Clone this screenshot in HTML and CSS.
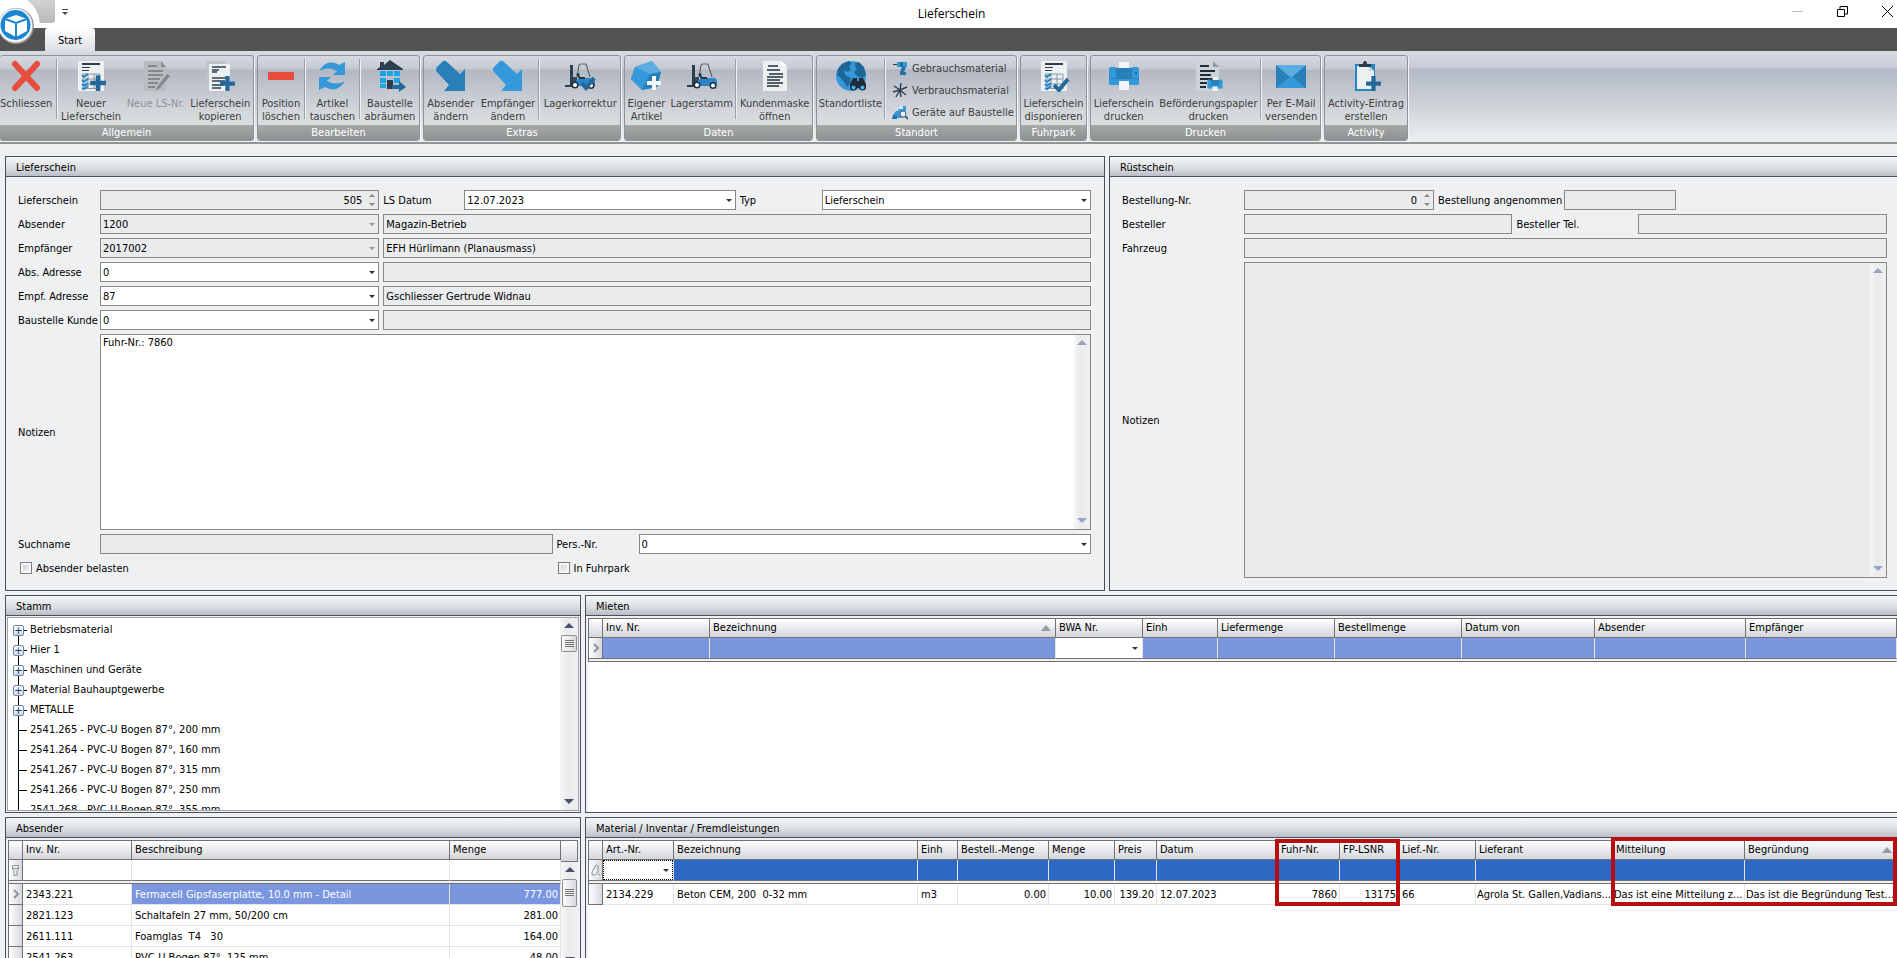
FILE: index.html
```
<!DOCTYPE html>
<html lang="de">
<head>
<meta charset="utf-8">
<title>Lieferschein</title>
<link rel="stylesheet" href="styles.css">
</head>
<body>
<svg class="defs" aria-hidden="true">
  <symbol id="plus" viewBox="0 0 16 16"><path d="M6 1h4v5h5v4h-5v5H6v-5H1V6h5z" fill="#24699a"/></symbol>
  <symbol id="form" viewBox="0 0 32 32">
    <path d="M3 1h26v30H3z" fill="#ecf0f1"/>
    <path d="M7 3h18v2H7zM7 7h8v1H7zM7 10h7v1H7z" fill="#2c3e50"/>
    <path d="M7 14h18M7 19h18M7 24h18M7 28.500h18M13 14v15M19 14v15M25 14v15" stroke="#8a98a3" fill="none"/>
    <path d="M7 15l2 2 4-3M7 20l2 2 4-3M7 24l2 2 4-3M7 28l2 1 4-3" stroke="#2480c0" stroke-width="2" fill="none"/>
  </symbol>
  <symbol id="lift" viewBox="0 0 32 32">
    <path d="M13 17l2-12q0-1 2-1h5l4 13" stroke="#5c6670" stroke-width="1.200" fill="none"/>
    <path d="M6 5h3v21H6zM1 25h9v2H1z" fill="#2c3e50"/><path d="M9 17h4v8H9z" fill="#34495e"/>
    <path d="M12 20l4-2h13q2 1 2 4v4H12z" fill="#2c84c8"/><path d="M15 13l1 4h5v2h-6l-3-5z" fill="#263746"/>
    <circle cx="11" cy="25" r="3.500" fill="#23303c"/><circle cx="11" cy="25" r="2" fill="#fff"/>
    <circle cx="27" cy="25.500" r="3.500" fill="#23303c"/><circle cx="27" cy="25.500" r="2" fill="#fff"/>
  </symbol>
  <symbol id="arrow" viewBox="0 0 32 32"><path d="M2 7L8 1q2-1 4 1l13 12 5-5v22H9l5-6L2 12q-2-3 0-5z" fill="currentColor"/></symbol>
  <symbol id="printer" viewBox="0 0 32 32">
    <path d="M11 2h10v7H11z" fill="#f3f6f7"/><path d="M1 9q0-2 2-2h5v2h16V7h5q2 0 2 2v16H1z" fill="#3498db"/>
    <path d="M8 8h16v11H8z" fill="#2980b9"/><path d="M1 18h7v1H1zM24 18h7v1h-7z" fill="#2980b9"/><path d="M27 12h2v2h-2z" fill="#22618d"/><path d="M11 21h10v9H11z" fill="#f3f6f7"/>
  </symbol>
  <symbol id="bars" viewBox="0 0 9 9"><path d="M0 .5h9M0 2.500h9M0 4.500h9M0 6.500h9" stroke="#777"/></symbol>
</svg>

<header class="titlebar">
  <div class="quick"></div>
  <button class="quick-menu" aria-label="Schnellzugriff anpassen"><svg width="6" height="6"><path d="M0 .5h6" stroke="#444"/><path d="M0 3h6L3 6z" fill="#444"/></svg></button>
  <h1>Lieferschein</h1>
  <div class="window-buttons">
    <button aria-label="Minimieren"><svg width="11" height="11"><path d="M0 5.500h11" stroke="#bbb"/></svg></button>
    <button aria-label="Wiederherstellen"><svg width="11" height="11"><path d="M.5 3.500h7v7h-7zM3 3V.5h7.500V8H8" fill="none" stroke="#000"/></svg></button>
    <button aria-label="Schliessen"><svg width="11" height="11"><path d="M0 0l11 11M11 0L0 11" stroke="#000"/></svg></button>
  </div>
</header>
<svg class="orb" width="42" height="50" viewBox="0 0 42 50" role="img" aria-label="Anwendungsmenü">
  <path d="M0 0h27Q40 9 40 28H0z" fill="#fff"/>
  <circle cx="16" cy="26" r="18" fill="#8f9499"/><circle cx="15.500" cy="25.500" r="17" fill="#f4f5f6"/>
  <circle cx="15.500" cy="25" r="15" fill="#1b87d2"/>
  <path d="M16 15l11 4v12l-11 6-11-6V19z" fill="#fff"/><path d="M5 19l11 4 11-4M16 23v14" stroke="#1b87d2" stroke-width="2" fill="none"/>
</svg>
<nav class="tabs"><button class="tab">Start</button></nav>

<div class="ribbon">
  <section class="group g-general">
    <div class="tools">
      <button class="tool snug"><svg><path d="M5 4l22 24M27 4L5 28" stroke="#e74c3c" stroke-width="6" stroke-linecap="round"/></svg>Schliessen</button><i class="sep"></i>
      <button class="tool"><svg><use href="#form"/><use href="#plus" x="14" y="14" width="18" height="18"/></svg>Neuer<br>Lieferschein</button>
      <button class="tool" disabled><svg><path d="M4 1h17l5 6v24H4z" fill="#b9bcbf"/><path d="M21 1v6h5z" fill="#8d9195"/><path d="M8 6h9M8 11h15M8 15h15M8 19h12M8 23h10M8 27h7" stroke="#85898d" stroke-width="2"/><path d="M17 27L27 14l3 2-10 12-4 2z" fill="#85898d"/></svg>Neue LS-Nr.</button>
      <button class="tool"><svg><path d="M2 1h20v26H2z" fill="#bdc3c7"/><path d="M5 4h21v27H5z" fill="#ecf0f1"/><path d="M8 7h14M8 10h7M8 12h5M8 18h15M8 21h13M8 25h11M8 28h9" stroke="#2c3e50" stroke-width="1.500"/><use href="#plus" x="15" y="15" width="17" height="17"/></svg>Lieferschein<br>kopieren</button>
    </div><h2>Allgemein</h2>
  </section>
  <section class="group g-edit">
    <div class="tools">
      <button class="tool"><svg><rect x="3" y="12" width="26" height="8" rx="1" fill="#e74c3c"/></svg>Position<br>löschen</button><i class="sep"></i>
      <button class="tool"><svg><path d="M3 11Q11-2 23 5l6-3v13H17l4-4Q12 6 3 11z" fill="#3498db"/><path d="M29 21q-8 13-20 6l-6 3V17h12l-4 4q9 5 18 0z" fill="#3498db"/></svg>Artikel<br>tauschen</button><i class="sep"></i>
      <button class="tool"><svg><path d="M3 9l3-2V2h4v3l6-5 13 9v1H3zM6 10h20v19H6z" fill="#2c3e50"/><path d="M6 10h20v19H6z" fill="#b9c1ca"/><path d="M6 11h6v5H6zM13 11h6v5h-6zM20 11h6v5h-6zM6 18h6v5H6zM20 18h6v5h-6zM6 24h6v4H6z" fill="#1ba4e8"/><path d="M13 20h6v9h-6z" fill="#2c3e50"/><path d="M18 25h7v-4l7 6-7 5v-3h-7z" fill="#24699a"/></svg>Baustelle<br>abräumen</button>
    </div><h2>Bearbeiten</h2>
  </section>
  <section class="group g-extras">
    <div class="tools">
      <button class="tool dark"><svg><use href="#arrow"/></svg>Absender<br>ändern</button>
      <button class="tool light"><svg><use href="#arrow"/></svg>Empfänger<br>ändern</button><i class="sep"></i>
      <button class="tool"><svg><use href="#lift"/><path d="M18 23l4 5 8-10" stroke="#24699a" stroke-width="4" fill="none"/></svg>Lagerkorrektur</button>
    </div><h2>Extras</h2>
  </section>
  <section class="group g-data">
    <div class="tools">
      <button class="tool"><svg><path d="M5 7l17-6 9 11-4 15-15 3-11-11z" fill="#3498db"/><path d="M5 7l17-6 9 11-11 2z" fill="#5dade2"/><path d="M5 7l15 7-8 16L1 19z" fill="#3498db"/><path d="M20 14l11-2-4 15-15 3z" fill="#2980b9"/><path d="M22 16h4v5h5v4h-5v5h-4v-5h-5v-4h5z" fill="#f4f7f8"/></svg>Eigener<br>Artikel</button>
      <button class="tool"><svg><use href="#lift"/></svg>Lagerstamm</button><i class="sep"></i>
      <button class="tool"><svg><path d="M4 1h18l6 5v25H4z" fill="#ecf0f1"/><path d="M22 1v5h6z" fill="#fff"/><path d="M9 6h10M8 10h13M10 14h14M8 17h16M8 20h13M8 23h16M8 26h12" stroke="#1f2d3a" stroke-width="1.500"/></svg>Kundenmaske<br>öffnen</button>
    </div><h2>Daten</h2>
  </section>
  <section class="group g-site">
    <div class="tools">
      <button class="tool"><svg><circle cx="16" cy="16" r="15" fill="#3498db"/><path d="M3 9l4-5 7-3 3 3-3 2 2 4-4 2-3-2 1 5 6 3-1 5-3 4-3-5-4-5-3-2zM20 3l4-1 5 5 2 8-4 3-5-2-3-4 3-3-2-3z" fill="#1f6698"/><path d="M15 24l3-6h4v3h2v-3h4l3 6v4H15z" fill="#1f2d3a"/><circle cx="18.500" cy="27" r="3.500" fill="#1f2d3a"/><circle cx="27.500" cy="27" r="3.500" fill="#1f2d3a"/><circle cx="18.500" cy="27.500" r="2" fill="#3fb4f2"/><circle cx="27.500" cy="27.500" r="2" fill="#3fb4f2"/></svg>Standortliste</button><i class="sep"></i>
      <div class="tool-list">
        <button class="small-tool"><svg viewBox="0 0 16 16"><path d="M5 2h10v5H5z" fill="#3498db"/><path d="M1 4h4v1H1z" fill="#2c3e50"/><path d="M10 7h4l-2 5h2v3H8v-3z" fill="#2471a3"/><path d="M8 2h3v5H8z" fill="#2471a3"/></svg>Gebrauchsmaterial</button>
        <button class="small-tool"><svg viewBox="0 0 16 16"><path d="M2 4l6 4 6 5M9 1L8 8l-4 7M15 5L8 8l-7 2M8 8l1 7" stroke="#2c3e50" stroke-width="1.400" fill="none"/></svg>Verbrauchsmaterial</button>
        <button class="small-tool"><svg viewBox="0 0 16 16"><path d="M1 11l3-4h2l2-5h6v4l-3 6v2H1z" fill="#3498db"/><path d="M6 5l2-3h3v3z" fill="#d6eaf8"/><path d="M1 11l4 1v3H0z" fill="#2471a3"/><circle cx="11" cy="10" r="3" fill="#e9f2f8" stroke="#4e6071"/><path d="M13 12l3 3" stroke="#4e6071" stroke-width="2"/></svg>Geräte auf Baustelle</button>
      </div>
    </div><h2>Standort</h2>
  </section>
  <section class="group g-fleet">
    <div class="tools">
      <button class="tool"><svg><use href="#form"/><path d="M16 25l5 5 9-11" stroke="#24699a" stroke-width="4" fill="none"/></svg>Lieferschein<br>disponieren</button>
    </div><h2>Fuhrpark</h2>
  </section>
  <section class="group g-print">
    <div class="tools">
      <button class="tool"><svg><use href="#printer"/></svg>Lieferschein<br>drucken</button>
      <button class="tool"><svg><path d="M4 1h17l6 6v24H4z" fill="#cdd3d6"/><path d="M21 1v6h6z" fill="#8c99a3"/><path d="M8 6h9M8 11h15M8 15h11M8 19h13M8 23h7M8 27h6" stroke="#1f2d3a" stroke-width="2"/><use href="#printer" x="15" y="16" width="16" height="16"/></svg>Beförderungspapier<br>drucken</button><i class="sep"></i>
      <button class="tool"><svg><path d="M1 5h30v23H1z" fill="#2980b9"/><path d="M1 5h30L16 18z" fill="#5dade2"/><path d="M1 28l15-12 15 12z" fill="#3498db"/></svg>Per E-Mail<br>versenden</button>
    </div><h2>Drucken</h2>
  </section>
  <section class="group g-activity">
    <div class="tools">
      <button class="tool"><svg><path d="M5 4h20v27H5z" fill="#2584c6"/><path d="M7 6h12l5 5v18H7z" fill="#ecf0f1"/><path d="M19 6v5h5z" fill="#b9d4e6"/><path d="M9 4h4q0-3 2-3t2 3h4v3H9z" fill="#2c3e50"/><use href="#plus" x="15" y="15" width="17" height="17"/></svg>Activity-Eintrag<br>erstellen</button>
    </div><h2>Activity</h2>
  </section>
</div>

<main>
  <div class="row row-top">
    <section class="panel">
      <h3>Lieferschein</h3>
      <form class="form form-note">
        <label for="nr">Lieferschein</label>
        <span class="field spin"><input id="nr" class="num" value="505" disabled></span>
        <label for="datum">LS Datum</label>
        <span class="field drop"><input id="datum" value="12.07.2023"></span>
        <label for="typ">Typ</label>
        <span class="field drop"><select id="typ"><option>Lieferschein</option></select></span>

        <label for="abs">Absender</label>
        <span class="field drop off"><select id="abs" disabled><option>1200</option></select></span>
        <input class="wide" aria-label="Absender Name" value="Magazin-Betrieb" disabled>
        <label for="empf">Empfänger</label>
        <span class="field drop off"><select id="empf" disabled><option>2017002</option></select></span>
        <input class="wide" aria-label="Empfänger Name" value="EFH Hürlimann (Planausmass)" disabled>
        <label for="absadr">Abs. Adresse</label>
        <span class="field drop"><select id="absadr"><option>0</option></select></span>
        <input class="wide" aria-label="Absender Adresse" disabled>
        <label for="empfadr">Empf. Adresse</label>
        <span class="field drop"><select id="empfadr"><option>87</option></select></span>
        <input class="wide" aria-label="Empfänger Adresse" value="Gschliesser Gertrude Widnau" disabled>
        <label for="kunde">Baustelle Kunde</label>
        <span class="field drop"><select id="kunde"><option>0</option></select></span>
        <input class="wide" aria-label="Baustelle Kunde Name" disabled>

        <label for="notizen">Notizen</label>
        <div class="memo full"><textarea id="notizen">Fuhr-Nr.: 7860</textarea><span class="scroll pale"></span></div>

        <label for="such">Suchname</label>
        <div class="halves full">
          <input id="such" disabled>
          <label for="pers">Pers.-Nr.</label>
          <span class="field drop"><select id="pers"><option>0</option></select></span>
        </div>
        <div class="checks">
          <label class="check"><input type="checkbox">Absender belasten</label>
          <label class="check"><input type="checkbox">In Fuhrpark</label>
        </div>
      </form>
    </section>
    <section class="panel open-right">
      <h3>Rüstschein</h3>
      <form class="form form-order">
        <label for="bnr">Bestellung-Nr.</label>
        <div class="order-a">
          <span class="field spin"><input id="bnr" class="num" value="0" disabled></span>
          <label for="bang">Bestellung angenommen</label>
          <input id="bang" disabled>
        </div>
        <label for="best">Besteller</label>
        <div class="order-b">
          <input id="best" disabled>
          <label for="btel">Besteller Tel.</label>
          <input id="btel" disabled>
        </div>
        <label for="fzg">Fahrzeug</label>
        <input id="fzg" disabled>
        <label for="rnot">Notizen</label>
        <div class="memo tall"><textarea id="rnot" disabled></textarea><span class="scroll pale"></span></div>
      </form>
    </section>
  </div>

  <div class="row row-mid">
    <section class="panel">
      <h3>Stamm</h3>
      <div class="tree">
        <ul>
          <li class="node"><button aria-label="Öffnen">+</button>Betriebsmaterial</li>
          <li class="node"><button aria-label="Öffnen">+</button>Hier 1</li>
          <li class="node"><button aria-label="Öffnen">+</button>Maschinen und Geräte</li>
          <li class="node"><button aria-label="Öffnen">+</button>Material Bauhauptgewerbe</li>
          <li class="node"><button aria-label="Öffnen">+</button>METALLE</li>
          <li>2541.265 - PVC-U Bogen 87°, 200 mm</li>
          <li>2541.264 - PVC-U Bogen 87°, 160 mm</li>
          <li>2541.267 - PVC-U Bogen 87°, 315 mm</li>
          <li>2541.266 - PVC-U Bogen 87°, 250 mm</li>
          <li>2541.268 - PVC-U Bogen 87°, 355 mm</li>
        </ul>
        <span class="scroll"><span class="thumb"><svg width="9" height="8"><use href="#bars" width="9" height="9"/></svg></span></span>
      </div>
    </section>
    <section class="panel open-right">
      <h3>Mieten</h3>
      <div class="grid">
        <table>
          <colgroup><col class="w14"><col class="w107"><col class="w346"><col class="w87"><col class="w75"><col class="w117"><col class="w127"><col class="w133"><col class="w151"><col></colgroup>
          <thead><tr><th></th><th>Inv. Nr.</th><th class="sorted">Bezeichnung</th><th>BWA Nr.</th><th>Einh</th><th>Liefermenge</th><th>Bestellmenge</th><th>Datum von</th><th>Absender</th><th>Empfänger</th></tr></thead>
          <tbody>
            <tr class="new soft"><td class="mark"><svg width="6" height="10"><path d="M1 1l4 4-4 4" stroke="#8d95a0" stroke-width="2" fill="none"/></svg></td><td></td><td></td><td class="edit"><span class="field drop"><select aria-label="BWA Nr."><option></option></select></span></td><td></td><td></td><td></td><td></td><td></td><td></td></tr>
            <tr class="split"><td colspan="10"></td></tr>
          </tbody>
        </table>
      </div>
    </section>
  </div>

  <div class="row row-bottom">
    <section class="panel open-bottom">
      <h3>Absender</h3>
      <div class="grid with-scroll">
        <table>
          <colgroup><col class="w14"><col class="w109"><col><col class="w111"></colgroup>
          <thead><tr><th></th><th>Inv. Nr.</th><th>Beschreibung</th><th>Menge</th></tr></thead>
          <tbody>
            <tr class="filter"><td class="mark"><svg width="7" height="11"><path d="M.5.5h6v3L5 6v4.500H2V6L.5 3.500zM.5 3.500h6" stroke="#8d95a0" fill="none"/></svg></td><td></td><td></td><td></td></tr>
            <tr class="split"><td colspan="4"></td></tr>
            <tr class="selected"><td class="mark"><svg width="6" height="10"><path d="M1 1l4 4-4 4" stroke="#8d95a0" stroke-width="2" fill="none"/></svg></td><td class="key">2343.221</td><td>Fermacell Gipsfaserplatte, 10.0 mm - Detail</td><td class="num">777.00</td></tr>
            <tr><td class="mark"></td><td>2821.123</td><td>Schaltafeln 27 mm, 50/200 cm</td><td class="num">281.00</td></tr>
            <tr><td class="mark"></td><td>2611.111</td><td>Foamglas&nbsp; T4 &nbsp; 30</td><td class="num">164.00</td></tr>
            <tr><td class="mark"></td><td>2541.263</td><td>PVC-U Bogen 87°, 125 mm</td><td class="num">-48.00</td></tr>
          </tbody>
        </table>
        <div class="side"><span class="scroll"><span class="thumb long"><svg width="9" height="8"><use href="#bars" width="9" height="9"/></svg></span></span></div>
      </div>
    </section>
    <section class="panel open-right open-bottom">
      <h3>Material / Inventar / Fremdleistungen</h3>
      <div class="grid">
        <table>
          <colgroup><col class="w14"><col class="w71"><col class="w244"><col class="w40"><col class="w91"><col class="w66"><col class="w42"><col class="w121"><col class="w62"><col class="w59"><col class="w77"><col class="w137"><col class="w132"><col></colgroup>
          <thead><tr><th></th><th>Art.-Nr.</th><th>Bezeichnung</th><th>Einh</th><th>Bestell.-Menge</th><th>Menge</th><th>Preis</th><th>Datum</th><th>Fuhr-Nr.</th><th>FP-LSNR</th><th>Lief.-Nr.</th><th>Lieferant</th><th>Mitteilung</th><th class="sorted">Begründung</th></tr></thead>
          <tbody>
            <tr class="new strong"><td class="mark"><svg width="9" height="12"><path d="M1 8l4-7 2 1v6l-3 3H1zM7 10.500h2" stroke="#8d95a0" fill="none"/></svg></td><td class="edit focus"><span class="field drop"><select aria-label="Art.-Nr."><option></option></select></span></td><td></td><td></td><td></td><td></td><td></td><td></td><td></td><td></td><td></td><td></td><td></td><td></td></tr>
            <tr class="split"><td colspan="14"></td></tr>
            <tr><td class="mark"></td><td>2134.229</td><td>Beton CEM, 200&nbsp; 0-32 mm</td><td>m3</td><td class="num">0.00</td><td class="num">10.00</td><td class="num">139.20</td><td>12.07.2023</td><td class="num">7860</td><td class="num">13175</td><td>66</td><td class="long-text">Agrola St. Gallen,Vadians...</td><td class="long-text">Das ist eine Mitteilung z...</td><td class="long-text">Das ist die Begründung Test...</td></tr>
          </tbody>
        </table>
        <div class="callout callout-trip"></div>
        <div class="callout callout-message"></div>
      </div>
    </section>
  </div>
</main>
</body>
</html>
```
FILE: styles.css
```
* { box-sizing: border-box; }
body {
  margin: 0;
  height: 100vh;
  display: flex;
  flex-direction: column;
  overflow: hidden;
  position: relative;
  background: #eff0f2;
  color: #000;
  font: 11px/13px "DejaVu Sans Condensed", "DejaVu Sans", sans-serif;
}
button, input, select, textarea { font: inherit; color: inherit; margin: 0; }
button { border: 0; padding: 0; background: none; }
h1, h2, h3 { margin: 0; font: inherit; }
.defs { position: absolute; width: 0; height: 0; }

/* Title bar and tabs */
.titlebar { height: 28px; flex: none; display: flex; background: #fff; }
.quick { width: 55px; height: 23px; background: linear-gradient(#d2d2d2, #b9b9b9); border-radius: 0 0 3px 0; }
.quick-menu { padding: 0 7px; height: 23px; }
.titlebar h1 { flex: 1; padding: 5px 0 0 36px; text-align: center; font: 12px/18px "Open Sans", sans-serif; }
.window-buttons { display: flex; gap: 34px; align-items: center; height: 23px; padding-right: 4px; }
.window-buttons svg { display: block; }
.orb { position: absolute; left: 0; top: 0; }
.tabs { height: 23px; flex: none; background: #535353; padding-left: 45px; }
.tab {
  width: 50px; height: 23px; display: block; padding-top: 2px;
  border-radius: 3px 3px 0 0;
  background: linear-gradient(#ffffff, #dcdfe5);
}

/* Ribbon */
.ribbon {
  flex: none; height: 93px; padding-top: 4px;
  display: flex; gap: 3px; align-items: flex-start;
  background: linear-gradient(#d9dce2, #c5cad5 17px, #b3bac6 18px, #d3d7dc 60px, #ebeeef 88px);
  border-bottom: 2px solid #8f9494;
  color: #3d3d3d;
}
.group {
  flex: none; height: 86px;
  display: flex; flex-direction: column;
  border: 1px solid #8e9398; border-radius: 3px; overflow: hidden;
  box-shadow: 1px 1px 0 #f4f5f6;
  background: linear-gradient(#d6d9df, #c4c9d2 13px, #b2b8c3 14px, #cfd3d9 50px, #dcdfe0 70px);
}
.g-general { width: 254px; border-left: 0; }
.g-edit { width: 163px; }
.g-extras { width: 198px; }
.g-data { width: 189px; }
.g-site { width: 201px; }
.g-fleet { width: 67px; }
.g-print { width: 231px; }
.g-activity { width: 84px; }
.group h2 { height: 15px; line-height: 15px; text-align: center; color: #fff; background: linear-gradient(#a8aaaa, #8d9090); }
.tools { flex: 1; display: flex; align-items: stretch; }
.tool { flex: 1 1 auto; align-self: flex-start; padding-top: 4px; text-align: center; white-space: nowrap; }
.tool svg { display: block; width: 32px; height: 32px; margin: 0 auto 5px; }
.tool:disabled { color: #8f9296; }
.snug { flex: none; padding-right: 2px; margin-right: 2px; }
.dark svg { color: #2980b9; }
.light svg { color: #3498db; }
.sep { width: 2px; margin: 3px 0 6px; border-left: 1px solid #9ba0a7; background: #eef0f2; }
.tool-list { flex: none; width: 130px; display: flex; flex-direction: column; padding: 1px 0 0 6px; }
.small-tool { height: 22px; display: flex; align-items: center; gap: 4px; white-space: nowrap; }
.small-tool svg { width: 16px; height: 16px; flex: none; }

/* Panels */
main { flex: 1; min-height: 0; display: flex; flex-direction: column; gap: 4px; padding: 12px 0 0 5px; }
.row { display: grid; gap: 4px; flex: none; }
.row-top { grid-template-columns: 1100fr 788fr; }
.row-mid, .row-bottom { grid-template-columns: 576fr 1312fr; }
.row-mid { height: 218px; }
.row-bottom { flex: 1; min-height: 0; }
.panel { display: flex; flex-direction: column; min-width: 0; min-height: 0; border: 1px solid #4a515c; overflow: hidden; }
.open-right { border-right: 0; }
.open-bottom { border-bottom: 0; }
.panel h3 { flex: none; height: 20px; line-height: 21px; padding-left: 10px; border-bottom: 1px solid #4a515c; background: linear-gradient(#f6f7f7, #dadde0 60%, #b9bec7); }

/* Forms */
.form { display: grid; gap: 4px; align-items: center; padding: 13px 13px 12px 12px; }
.form-note { grid-template-columns: 78px minmax(0, 279fr) 77px minmax(0, 271fr) 78px minmax(0, 269fr); }
.form-order { grid-template-columns: 118px minmax(0, 1fr); padding-right: 10px; }
.form label { white-space: nowrap; }
.wide { grid-column: span 4; }
.full { grid-column: 2 / -1; }
.form input:not([type]), select, textarea {
  display: block; width: 100%; height: 20px; min-width: 0;
  padding: 0 2px; border: 1px solid #858788; border-radius: 0;
  background: #fff; appearance: none; outline: 0; resize: none;
}
.form input:not([type]):disabled, select:disabled, textarea:disabled { background: #eaebed; color: #000; opacity: 1; }
.field { position: relative; display: block; min-width: 0; }
.drop::after {
  content: ""; position: absolute; right: 4px; top: 9px;
  border: solid transparent; border-width: 3px 3px 0; border-top-color: #333; pointer-events: none;
}
.off::after { border-top-color: #999; }
.form .spin input.num { text-align: right; padding-right: 16px; }
.spin::before, .spin::after { content: ""; position: absolute; right: 4px; border: solid transparent; }
.spin::before { top: 4px; border-width: 0 3px 3px; border-bottom-color: #888; }
.spin::after { bottom: 4px; border-width: 3px 3px 0; border-top-color: #888; }
.memo { display: grid; grid-template-columns: minmax(0, 1fr) 16px; height: 196px; border: 1px solid #858788; }
.memo.tall { height: 316px; }
.memo textarea { height: 100%; border: 0; padding: 1px 2px; }
.halves { display: grid; grid-template-columns: 1fr 78px 1fr; gap: 4px; align-items: center; }
.order-a, .order-b { display: grid; gap: 4px; align-items: center; }
.order-a { grid-template-columns: minmax(0, 190fr) 122px minmax(0, 112fr) minmax(0, 207fr); }
.order-b { grid-template-columns: minmax(0, 269fr) 118px minmax(0, 249fr); }
.checks { grid-column: 1 / -1; display: grid; grid-template-columns: 1fr 1fr; gap: 4px; height: 20px; align-items: center; padding: 0 0 0 2px; }
.check { display: flex; align-items: center; gap: 4px; }
.check input { appearance: none; width: 12px; height: 12px; border: 1px solid #7d8082; background: linear-gradient(135deg, #c3c7cf, #fff); box-shadow: inset 0 0 0 2px #f6f6f6; }

/* Scroll bars */
.scroll { position: relative; display: block; background: linear-gradient(90deg, #f7f7f7, #ebebec 40%, #efeff0); }
.scroll::before, .scroll::after { content: ""; position: absolute; left: 50%; margin-left: -5px; border: solid transparent; }
.scroll::before { top: 5px; border-width: 0 5px 5px; border-bottom-color: #46516f; }
.scroll::after { bottom: 6px; border-width: 5px 5px 0; border-top-color: #46516f; }
.pale::before { border-bottom-color: #97a3c8; }
.pale::after { border-top-color: #97a3c8; }
.thumb { position: absolute; left: 1px; right: 1px; top: 17px; height: 17px; display: flex; align-items: center; justify-content: center; border: 1px solid #8d8f93; border-radius: 2px; background: linear-gradient(90deg, #fbfbfb, #d9dade); }
.thumb.long { height: 28px; }

/* Tree */
.tree { flex: 1; min-height: 0; margin: 1px; display: grid; grid-template-columns: minmax(0, 1fr) 18px; border: 1px solid #a2a4a7; background: #fff; overflow: hidden; }
.tree ul { list-style: none; margin: 0; padding: 2px 0 0 5px; overflow: hidden; }
.tree li { position: relative; height: 20px; line-height: 20px; padding-left: 17px; white-space: nowrap; }
.tree li::before { content: ""; position: absolute; left: 5px; top: 0; width: 8px; height: 20px; border-left: 1px solid #000; background: linear-gradient(#000, #000) 0 10px / 8px 1px no-repeat; }
.tree li:first-child::before { top: 10px; height: 10px; background-position: 0 0; }
.tree button { position: absolute; left: 0; top: 5px; width: 11px; height: 11px; border: 1px solid #6f86a8; border-radius: 2px; background: linear-gradient(#fff, #cfdaee); color: #1d3561; line-height: 8px; }

/* Tables */
.grid { position: relative; flex: 1; min-height: 0; margin: 2px 0 0 2px; background: #fff; }
.with-scroll { display: grid; grid-template-columns: minmax(0, 1fr) 17px; margin-right: 2px; }
table { width: 100%; table-layout: fixed; align-self: start; border-collapse: separate; border-spacing: 0; border-left: 1px solid #707274; }
th, td { padding: 0 3px; overflow: hidden; text-overflow: ellipsis; white-space: nowrap; text-align: left; font-weight: normal; }
th { position: relative; height: 20px; padding-bottom: 2px; border: solid #707274; border-width: 1px 1px 1px 0; background: linear-gradient(#fff, #e9eaed 50%, #d3d6da); }
td { height: 21px; border-right: 1px solid #e3e4e6; border-bottom: 1px solid #e3e4e6; }
th:first-child, .mark { padding: 0; text-align: center; }
td.mark { border-color: #707274; background: linear-gradient(90deg, #fff, #d6d8dc); }
.mark svg { display: block; margin: auto; }
td.num { text-align: right; padding: 0 2px 0 0; }
td.long-text { padding: 0 0 0 1px; }
.new td, .filter td { border-bottom-color: #707274; }
.soft td:not(.mark):not(.edit) { background: #7a96df; }
.strong td:not(.mark):not(.edit) { background: #2d69c4; }
.selected td:not(.mark):not(.key) { background: #7a96df; color: #fff; }
.split td { height: 3px; padding: 0; line-height: 0; background: #eff0f2; border-bottom-color: #707274; }
td.edit { padding: 0; }
.edit select { border: 0; }
.focus select { border: 1px dotted #000; }
.sorted::after { content: ""; position: absolute; right: 4px; top: 6px; border: solid transparent; border-width: 0 5px 6px; border-bottom-color: #949aa3; }
.side { display: flex; flex-direction: column; }
.side::before { content: ""; flex: none; height: 20px; border: solid #707274; border-width: 1px 1px 1px 0; background: linear-gradient(#fff, #e9eaed 50%, #d3d6da); }
.side .scroll { flex: 1; }
.w14 { width: 14px; } .w40 { width: 40px; } .w42 { width: 42px; } .w59 { width: 59px; } .w62 { width: 62px; }
.w66 { width: 66px; } .w71 { width: 71px; } .w75 { width: 75px; } .w77 { width: 77px; } .w87 { width: 87px; }
.w91 { width: 91px; } .w107 { width: 107px; } .w109 { width: 109px; } .w111 { width: 111px; } .w117 { width: 117px; }
.w121 { width: 121px; } .w127 { width: 127px; } .w132 { width: 132px; } .w133 { width: 133px; } .w137 { width: 137px; }
.w151 { width: 151px; } .w244 { width: 244px; } .w346 { width: 346px; }

/* Highlight frames over the table */
.callout { position: absolute; border: 4px solid #b90d10; pointer-events: none; }
.callout-trip { left: 687px; top: -1px; width: 125px; height: 67px; }
.callout-message { left: 1023px; right: 0; top: -3px; height: 69px; }
```
